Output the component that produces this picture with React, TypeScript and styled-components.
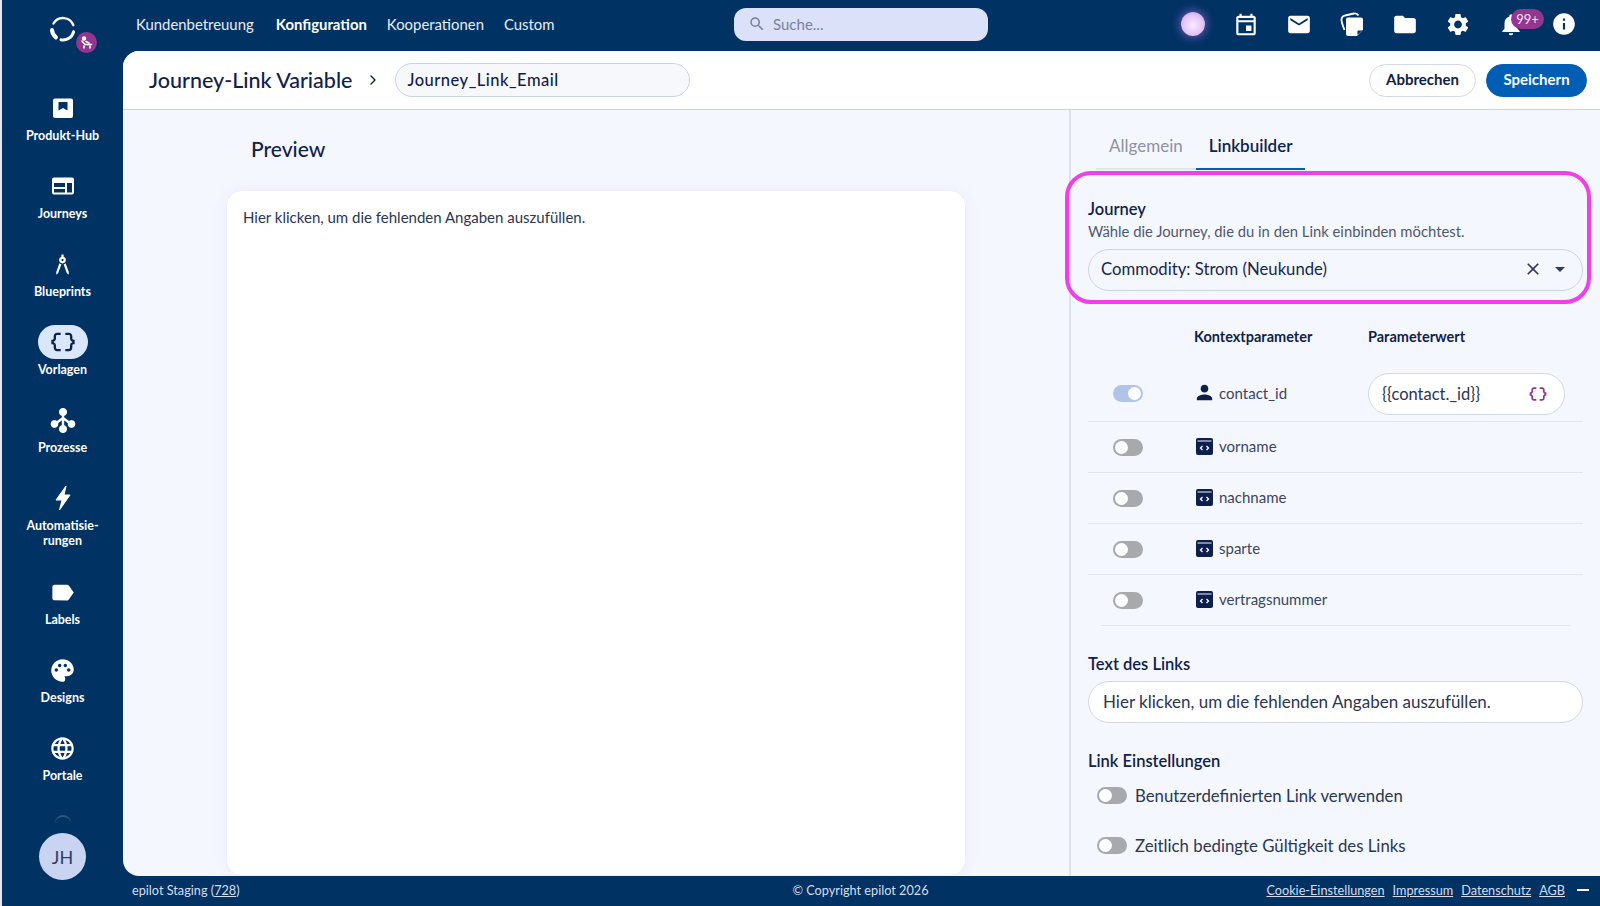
import React from 'react';
import styled, { createGlobalStyle } from 'styled-components';
import { ChevronRight } from 'lucide-react';
import {
  MdArchitecture,
  MdArrowDropDown,
  MdClose,
  MdDataObject,
  MdFolder,
  MdInfo,
  MdLabel,
  MdLanguage,
  MdMail,
  MdNotifications,
  MdOutlineEvent,
  MdPalette,
  MdPerson,
  MdSearch,
  MdSettings,
} from 'react-icons/md';

const GlobalStyle = createGlobalStyle`
  html, body, #root {
    margin: 0;
    height: 100%;
  }
  body {
    font-family: 'Lato', 'Open Sans', sans-serif;
    color: #10214a;
    overflow: hidden;
  }
  * {
    box-sizing: border-box;
  }
`;

const Page = styled.div`
  display: grid;
  grid-template-columns: 121px 1fr;
  grid-template-rows: 51px 1fr 30px;
  width: 1600px;
  height: 906px;
  background: #003263;
  border-left: 2px solid #dfe6f2;
`;

const Sidebar = styled.aside`
  position: relative;
  grid-row: 1 / 4;
  display: flex;
  flex-direction: column;
  align-items: center;
  color: #fff;
`;

const LogoWrap = styled.div`
  position: relative;
  flex: 0 0 85px;
  width: 60px;
  display: flex;
  justify-content: center;
  padding-top: 14px;
`;

const LogoBadge = styled.span`
  position: absolute;
  left: 43px;
  top: 32px;
  width: 21px;
  height: 21px;
  border-radius: 50%;
  background: #93368f;
  display: flex;
  align-items: center;
  justify-content: center;
`;

const NavItem = styled.div`
  width: 100%;
  display: flex;
  flex-direction: column;
  align-items: center;
  height: ${(p) => (p.$tall ? '94px' : '78px')};
  padding-top: 6px;
`;

const NavIcon = styled.span`
  width: 50px;
  height: 34px;
  border-radius: 17px;
  display: flex;
  align-items: center;
  justify-content: center;
  background: ${(p) => (p.$active ? '#dae6fa' : 'transparent')};
  color: ${(p) => (p.$active ? '#10214a' : '#fff')};
`;

const NavLabel = styled.span`
  margin-top: 3px;
  font-size: 12.5px;
  line-height: 15px;
  font-weight: 700;
  text-align: center;
`;

const ScrollHint = styled.span`
  position: absolute;
  left: 50%;
  top: 815px;
  width: 16px;
  height: 8px;
  margin-left: -8px;
  border-top: 2px solid rgba(255, 255, 255, 0.18);
  border-radius: 8px 8px 0 0;
`;

const Avatar = styled.div`
  margin-top: auto;
  margin-bottom: 26px;
  width: 47px;
  height: 47px;
  border-radius: 50%;
  background: #c9d4f2;
  color: #2f3d66;
  font-size: 18px;
  display: flex;
  align-items: center;
  justify-content: center;
`;

const TopBar = styled.header`
  display: flex;
  align-items: center;
  padding: 0 23px 3px 13px;
  color: #fff;
`;

const TopLinks = styled.nav`
  display: flex;
  gap: 20px;
  width: 598px;
`;

const TopLink = styled.span`
  font-size: 14.9px;
  margin-left: ${(p) => (p.$active ? '2px' : '0')};
  font-weight: ${(p) => (p.$active ? 700 : 400)};
  color: ${(p) => (p.$active ? '#fff' : '#e8edf8')};
`;

const SearchBox = styled.div`
  display: flex;
  align-items: center;
  gap: 7px;
  width: 254px;
  height: 33px;
  padding: 0 14px;
  border-radius: 12px;
  background: #dae1f9;
  color: #7b819b;
  font-size: 15px;
`;

const TopIcons = styled.div`
  margin-left: auto;
  display: flex;
  gap: 27px;
`;

const TopIcon = styled.span`
  position: relative;
  width: 26px;
  height: 26px;
  display: flex;
  align-items: center;
  justify-content: center;
  color: #fff;
`;

const Orb = styled.span`
  width: 24px;
  height: 24px;
  border-radius: 50%;
  background: radial-gradient(circle at 50% 55%, #f8ecff 0%, #e5c4f5 55%, #b68fe0 100%);
  box-shadow: 0 0 8px 2px rgba(168, 110, 230, 0.55);
`;

const Badge = styled.span`
  position: absolute;
  left: 13px;
  top: -2px;
  width: 33px;
  height: 20px;
  border-radius: 10px;
  background: #93368f;
  color: #f6e6f5;
  font-size: 13px;
  line-height: 20px;
  text-align: center;
`;

const Content = styled.main`
  display: flex;
  flex-direction: column;
  min-height: 0;
  background: #f5f7ff;
  border-radius: 16px 0 0 16px;
  overflow: hidden;
`;

const HeaderRow = styled.div`
  display: flex;
  align-items: center;
  flex: 0 0 59px;
  padding: 0 13px 0 26px;
  background: #fff;
  border-bottom: 1px solid #ccd2e0;
`;

const PageTitle = styled.h1`
  margin: -1px 0 0;
  font-size: 21.5px;
  font-weight: 500;
  color: #10214a;
`;

const Crumb = styled.span`
  display: flex;
  margin: 0 14px 0 13px;
  color: #10214a;
`;

const NameField = styled.div`
  width: 295px;
  height: 34px;
  padding: 0 11px;
  border: 1px solid #ccd2e0;
  border-radius: 17px;
  background: #f7f8fb;
  font-size: 16.5px;
  letter-spacing: 0.5px;
  font-weight: 500;
  line-height: 32px;
`;

const Actions = styled.div`
  margin-left: auto;
  display: flex;
  gap: 10px;
`;

const Button = styled.button`
  height: 33px;
  padding: 0 0 2px;
  width: ${(p) => (p.$primary ? '101px' : '107px')};
  border: 1px solid ${(p) => (p.$primary ? '#005eb4' : '#d3d8e2')};
  border-radius: 17px;
  background: ${(p) => (p.$primary ? '#005eb4' : '#fff')};
  color: ${(p) => (p.$primary ? '#fff' : '#10214a')};
  font-family: inherit;
  font-size: 15px;
  font-weight: 700;
`;

const Body = styled.div`
  flex: 1;
  min-height: 0;
  display: flex;
`;

const PreviewPane = styled.section`
  flex: 0 0 946px;
  display: flex;
  flex-direction: column;
  padding: 24px 103px 0 103px;
`;

const PreviewTitle = styled.h2`
  margin: 0 0 26px 25px;
  font-size: 21px;
  line-height: 30px;
  font-weight: 500;
`;

const PreviewCard = styled.div`
  flex: 1;
  padding: 16px;
  background: #fff;
  border-radius: 16px;
  border: 1px solid #eceff7;
  box-shadow: 0 0 16px rgba(60, 80, 140, 0.06);
  font-size: 15px;
  line-height: 20px;
  color: #2a3654;
`;

const SidePane = styled.section`
  flex: 1;
  min-width: 0;
  padding: 16px 17px 0 17px;
  border-left: 2px solid #dfe2ec;
`;

const Tabs = styled.div`
  display: flex;
  height: 44px;
  width: 209px;
  margin-left: 8px;
  border-bottom: 2px solid #e2e5ee;
`;

const Tab = styled.div`
  height: 44px;
  padding: 0 13px;
  line-height: 39px;
  font-size: 17px;
  font-weight: ${(p) => (p.$active ? 600 : 400)};
  color: ${(p) => (p.$active ? '#10214a' : '#8b92a3')};
  border-bottom: ${(p) => (p.$active ? '2px solid #005eb4' : 'none')};
`;

const JourneySection = styled.div`
  position: relative;
  margin-top: 29px;
`;

const Highlight = styled.div`
  position: absolute;
  inset: -28px -8px -13px -23px;
  border: 4.5px solid #f03ee8;
  border-radius: 26px;
  pointer-events: none;
`;

const FieldLabel = styled.div`
  font-size: 16.5px;
  line-height: 20px;
  font-weight: 600;
  color: #10214a;
`;

const FieldHint = styled.div`
  margin: 2px 0 8px;
  font-size: 14.8px;
  line-height: 20px;
  color: #50586e;
`;

const SelectBox = styled.div`
  display: flex;
  align-items: center;
  height: 42px;
  padding: 0 10px 2px 12px;
  border: 1px solid #cfd4e2;
  border-radius: 21px;
  font-size: 16.7px;
  color: #17264f;
`;

const SelectIcons = styled.span`
  margin-left: auto;
  display: flex;
  align-items: center;
  gap: 5px;
  color: #2c3a60;
`;

const TableHead = styled.div`
  display: grid;
  grid-template-columns: 81px 174px 1fr;
  padding-left: 25px;
  margin: 36px 0 19px;
  font-size: 14.5px;
  line-height: 20px;
  font-weight: 700;
`;

const ParamRow = styled.div`
  display: grid;
  grid-template-columns: 81px 174px 197px;
  align-items: center;
  margin: 0 ${(p) => (p.$inset ? '13px' : '0')};
  padding-left: ${(p) => (p.$inset ? '12px' : '25px')};
  height: ${(p) => (p.$first ? '56px' : '51px')};
  border-bottom: 1px solid #e2e5ef;
`;

const Toggle = styled.span`
  position: relative;
  display: inline-block;
  flex: 0 0 30px;
  width: 30px;
  height: 17px;
  border-radius: 9px;
  background: ${(p) => (p.$on ? '#b0c4ea' : '#a8a9ad')};
  &::after {
    content: '';
    position: absolute;
    top: 2px;
    left: ${(p) => (p.$on ? '15px' : '2px')};
    width: 13px;
    height: 13px;
    border-radius: 50%;
    background: #fff;
  }
`;

const ParamName = styled.span`
  display: flex;
  align-items: center;
  gap: 6px;
  padding: 0 0 2px 2px;
  font-size: 15px;
  color: #3a4562;
`;

const ParamIcon = styled.span`
  flex: 0 0 17px;
  width: 17px;
  min-width: 0;
  height: 17px;
  display: flex;
  align-items: center;
  justify-content: center;
  & > svg {
    flex-shrink: 0;
  }
`;

const WhiteField = styled.div`
  display: flex;
  align-items: center;
  height: 42px;
  border: 1px solid #d3d8e4;
  border-radius: 21px;
  background: #fff;
  font-size: ${(p) => (p.$wide ? '17px' : '16.5px')};
  color: #2a3654;
  padding: ${(p) => (p.$wide ? '0 14px 2px' : '0 16px 0 13px')};
`;

const VariableIcon = styled.span`
  margin-left: auto;
  display: flex;
  color: #93368f;
`;

const LinkTextLabel = styled(FieldLabel)`
  margin: 28px 0 7px;
`;

const SettingsLabel = styled(FieldLabel)`
  margin-top: 28px;
`;

const SettingRow = styled.div`
  display: flex;
  align-items: center;
  gap: 8px;
  height: 50px;
  padding: 0 0 1px 9px;
  font-size: 16.8px;
  color: #2a3654;
`;

const Footer = styled.footer`
  display: grid;
  grid-template-columns: 1fr auto 1fr;
  align-items: center;
  padding: 0 11px 2px 9px;
  font-size: 12.7px;
  color: #d7def0;
`;

const FooterLinks = styled.div`
  display: flex;
  align-items: center;
  justify-content: flex-end;
  gap: 8px;
`;

const FooterLink = styled.a`
  color: inherit;
  text-decoration: underline;
`;

const Minimize = styled.span`
  width: 12px;
  height: 2px;
  margin-left: 4px;
  background: #fff;
`;

const EpilotLogo = () => (
  <svg width="30" height="30" viewBox="0 0 30 30" fill="none" stroke="#fff" strokeLinecap="round">
    <path d="M5.5 9.5 A11 11 0 0 1 25.3 11.2" strokeWidth="2.4" />
    <path d="M4 16 A11 11 0 0 0 7.9 23.4" strokeWidth="4" />
    <path d="M13 25.8 A11 11 0 0 0 25.6 17.8" strokeWidth="3" />
  </svg>
);

const Lounger = () => (
  <svg width="15" height="15" viewBox="0 0 15 15" fill="none" stroke="#fff" strokeWidth="1.6" strokeLinecap="round">
    <circle cx="5" cy="3.5" r="1.4" fill="#fff" />
    <path d="M3 6 L6 9.5 H12.5" />
    <path d="M5 11 V13 M11 11 V13 M7 6.5 L10 8" />
  </svg>
);

const ProductHubIcon = () => (
  <svg width="24" height="24" viewBox="0 0 24 24">
    <path
      fill="#fff"
      fillRule="evenodd"
      d="M4 2.5h16a2 2 0 0 1 2 2V20a2 2 0 0 1-2 2H4a2 2 0 0 1-2-2V4.5a2 2 0 0 1 2-2zM7.5 6v8.5L12 12l4.5 2.5V6z"
    />
  </svg>
);

const JourneysIcon = () => (
  <svg width="24" height="24" viewBox="0 0 24 24">
    <path
      fill="#fff"
      fillRule="evenodd"
      d="M3 3.5h18a2 2 0 0 1 2 2v13a2 2 0 0 1-2 2H3a2 2 0 0 1-2-2v-13a2 2 0 0 1 2-2zM3 9v4h11V9zm0 6v3.5h11V15zm13-6v9.5h5V9z"
    />
  </svg>
);

const ProcessIcon = () => (
  <svg width="28" height="28" viewBox="0 0 28 28" fill="#fff" stroke="#fff">
    <path d="M14 7 V23 M14 12 L6 18 M14 12 L22 18" strokeWidth="2.4" fill="none" />
    <circle cx="14" cy="6" r="3.6" />
    <circle cx="5.5" cy="18" r="3.4" />
    <circle cx="22.5" cy="18" r="3.4" />
    <circle cx="14" cy="23" r="3.6" />
  </svg>
);

const BoltIcon = () => (
  <svg width="26" height="28" viewBox="0 0 26 28">
    <path fill="#fff" stroke="#fff" strokeLinejoin="round" d="M16 2 L6 16 H12 L9.5 26 L20 11 H14 Z" />
  </svg>
);

const CopyIcon = () => (
  <svg width="26" height="26" viewBox="0 0 26 26">
    <path fill="none" stroke="#fff" strokeWidth="1.8" d="M5.5 19 C3.5 14 2 9 2.6 7.5 C3 5.5 4 5 6 4.5 L15 2.5 C17 2 18.5 3 19.5 4.5" />
    <path fill="#fff" d="M9 6.5h13a2 2 0 0 1 2 2v10l-6 6.5H9a2 2 0 0 1-2-2V8.5a2 2 0 0 1 2-2z" />
    <path fill="#003263" d="M18.5 24 v-3.5 a1 1 0 0 1 1 -1 h3.5 z" />
  </svg>
);

const CodeBoxIcon = () => (
  <svg width="17" height="17" viewBox="0 0 17 17">
    <path fill="#0d1f4d" fillRule="evenodd" d="M2 0h13a2 2 0 0 1 2 2v13a2 2 0 0 1-2 2H2a2 2 0 0 1-2-2V2a2 2 0 0 1 2-2zM1.5 2.5v1h14v-1z" />
    <path fill="none" stroke="#fff" strokeWidth="1.3" d="M6.5 8 L4.5 10 L6.5 12 M10.5 8 L12.5 10 L10.5 12" />
  </svg>
);

const navItems = [
  { label: 'Produkt-Hub', icon: <ProductHubIcon /> },
  { label: 'Journeys', icon: <JourneysIcon /> },
  { label: 'Blueprints', icon: <MdArchitecture size={27} /> },
  { label: 'Vorlagen', icon: <MdDataObject size={28} />, active: true },
  { label: 'Prozesse', icon: <ProcessIcon /> },
  { label: 'Automatisie-\nrungen', icon: <BoltIcon />, tall: true },
  { label: 'Labels', icon: <MdLabel size={27} /> },
  { label: 'Designs', icon: <MdPalette size={27} /> },
  { label: 'Portale', icon: <MdLanguage size={27} /> },
];

const params = ['vorname', 'nachname', 'sparte', 'vertragsnummer'];

export default function App() {
  return (
    <>
      <GlobalStyle />
      <Page>
        <Sidebar>
          <LogoWrap>
            <EpilotLogo />
            <LogoBadge>
              <Lounger />
            </LogoBadge>
          </LogoWrap>
          {navItems.map((item) => (
            <NavItem key={item.label} $tall={item.tall}>
              <NavIcon $active={item.active}>{item.icon}</NavIcon>
              <NavLabel>
                {item.label.split('\n').map((line) => (
                  <div key={line}>{line}</div>
                ))}
              </NavLabel>
            </NavItem>
          ))}
          <ScrollHint />
          <Avatar>JH</Avatar>
        </Sidebar>

        <TopBar>
          <TopLinks>
            <TopLink>Kundenbetreuung</TopLink>
            <TopLink $active>Konfiguration</TopLink>
            <TopLink>Kooperationen</TopLink>
            <TopLink>Custom</TopLink>
          </TopLinks>
          <SearchBox>
            <MdSearch size={18} />
            Suche...
          </SearchBox>
          <TopIcons>
            <TopIcon>
              <Orb />
            </TopIcon>
            <TopIcon>
              <MdOutlineEvent size={27} />
            </TopIcon>
            <TopIcon>
              <MdMail size={27} />
            </TopIcon>
            <TopIcon>
              <CopyIcon />
            </TopIcon>
            <TopIcon>
              <MdFolder size={27} />
            </TopIcon>
            <TopIcon>
              <MdSettings size={27} />
            </TopIcon>
            <TopIcon>
              <MdNotifications size={27} />
              <Badge>99+</Badge>
            </TopIcon>
            <TopIcon>
              <MdInfo size={28} />
            </TopIcon>
          </TopIcons>
        </TopBar>

        <Content>
          <HeaderRow>
            <PageTitle>Journey-Link Variable</PageTitle>
            <Crumb>
              <ChevronRight size={16} />
            </Crumb>
            <NameField>Journey_Link_Email</NameField>
            <Actions>
              <Button>Abbrechen</Button>
              <Button $primary>Speichern</Button>
            </Actions>
          </HeaderRow>
          <Body>
            <PreviewPane>
              <PreviewTitle>Preview</PreviewTitle>
              <PreviewCard>Hier klicken, um die fehlenden Angaben auszufüllen.</PreviewCard>
            </PreviewPane>
            <SidePane>
              <Tabs>
                <Tab>Allgemein</Tab>
                <Tab $active>Linkbuilder</Tab>
              </Tabs>
              <JourneySection>
                <Highlight />
                <FieldLabel>Journey</FieldLabel>
                <FieldHint>Wähle die Journey, die du in den Link einbinden möchtest.</FieldHint>
                <SelectBox>
                  Commodity: Strom (Neukunde)
                  <SelectIcons>
                    <MdClose size={20} />
                    <MdArrowDropDown size={24} />
                  </SelectIcons>
                </SelectBox>
              </JourneySection>

              <TableHead>
                <span />
                <span>Kontextparameter</span>
                <span>Parameterwert</span>
              </TableHead>
              <ParamRow $first>
                <Toggle $on />
                <ParamName>
                  <ParamIcon>
                    <MdPerson size={23} color="#0d1f4d" />
                  </ParamIcon>
                  contact_id
                </ParamName>
                <WhiteField>
                  {'{{contact._id}}'}
                  <VariableIcon>
                    <MdDataObject size={20} />
                  </VariableIcon>
                </WhiteField>
              </ParamRow>
              {params.map((name, i) => (
                <ParamRow key={name} $inset={i === params.length - 1}>
                  <Toggle />
                  <ParamName>
                    <ParamIcon>
                      <CodeBoxIcon />
                    </ParamIcon>
                    {name}
                  </ParamName>
                </ParamRow>
              ))}

              <LinkTextLabel>Text des Links</LinkTextLabel>
              <WhiteField $wide>Hier klicken, um die fehlenden Angaben auszufüllen.</WhiteField>

              <SettingsLabel>Link Einstellungen</SettingsLabel>
              <SettingRow>
                <Toggle />
                Benutzerdefinierten Link verwenden
              </SettingRow>
              <SettingRow>
                <Toggle />
                Zeitlich bedingte Gültigkeit des Links
              </SettingRow>
            </SidePane>
          </Body>
        </Content>

        <Footer>
          <span>
            epilot Staging (<FooterLink>728</FooterLink>)
          </span>
          <span>© Copyright epilot 2026</span>
          <FooterLinks>
            <FooterLink>Cookie-Einstellungen</FooterLink>
            <FooterLink>Impressum</FooterLink>
            <FooterLink>Datenschutz</FooterLink>
            <FooterLink>AGB</FooterLink>
            <Minimize />
          </FooterLinks>
        </Footer>
      </Page>
    </>
  );
}
